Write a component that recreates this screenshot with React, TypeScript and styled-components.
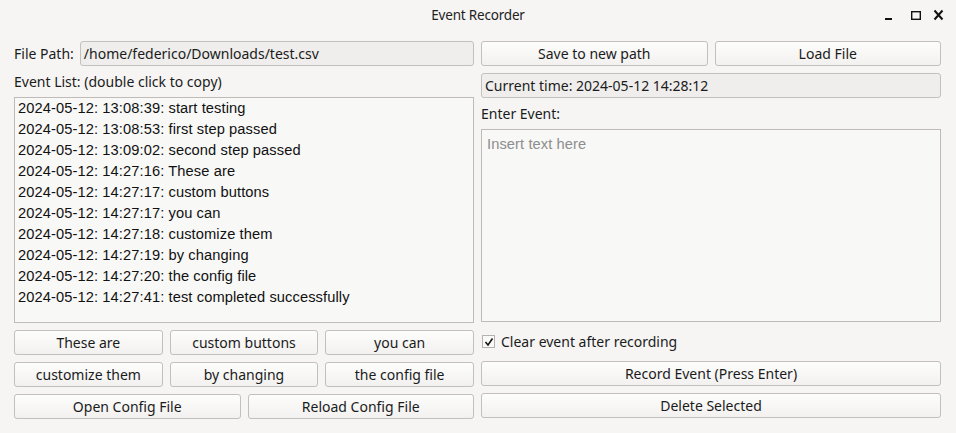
import React from "react";
import styled, { createGlobalStyle } from "styled-components";

const Global = createGlobalStyle`
  html, body { margin: 0; padding: 0; background: #f6f5f4; }
  * { box-sizing: border-box; }
`;

const Window = styled.div`
  width: 956px;
  height: 433px;
  background: #f6f5f4;
  display: flex;
  flex-direction: column;
  font-family: "Noto Sans", sans-serif;
  font-size: 14px;
  color: #1b1b1b;
  overflow: hidden;
`;

const TitleBar = styled.div`
  height: 30px;
  display: grid;
  grid-template-columns: 1fr auto 1fr;
  align-items: center;
`;

const Title = styled.div`
  grid-column: 2;
  font-size: 13.5px;
  color: #222;
  letter-spacing: -0.2px;
`;

const WinControls = styled.div`
  grid-column: 3;
  justify-self: end;
  display: flex;
  align-items: center;
  padding-right: 12px;
`;

const Main = styled.div`
  flex: 1;
  display: grid;
  grid-template-columns: 460px 460px;
  column-gap: 7px;
  padding: 12px 15px 14px 14px;
`;

const Column = styled.div`
  display: flex;
  flex-direction: column;
  gap: 7px;
  min-height: 0;
`;

const Row = styled.div`
  display: flex;
  align-items: center;
  gap: 6px;
  height: 25px;
`;

const Label = styled.div`
  height: 17px;
  line-height: 17px;
  white-space: nowrap;
`;

const ReadOnly = styled.div<{ $grow?: boolean }>`
  flex: ${(p) => (p.$grow ? 1 : "none")};
  height: 25px;
  line-height: 23px;
  padding: 0 3px;
  background: #efeeec;
  border: 1px solid #c4c0bc;
  border-radius: 3px;
  white-space: nowrap;
  overflow: hidden;
`;

const ListBox = styled.div`
  height: 226px;
  background: #f8f8f7;
  border: 1px solid #bfbbb7;
  overflow: hidden;
  font-family: "Liberation Sans", Arial, sans-serif;
  font-size: 14.67px;
  letter-spacing: 0.1px;
  color: #111;
`;

const ListItem = styled.div`
  height: 21px;
  line-height: 21px;
  padding-left: 3px;
  white-space: nowrap;
`;

const TextArea = styled.div`
  height: 193px;
  background: #f8f8f7;
  border: 1px solid #bfbbb7;
  padding: 6px 5px;
  font-family: "Liberation Sans", Arial, sans-serif;
  font-size: 14.67px;
  letter-spacing: 0.1px;
  color: #8d8d8d;
`;

const ButtonGrid = styled.div<{ $cols: number }>`
  display: grid;
  grid-template-columns: repeat(${(p) => p.$cols}, 1fr);
  column-gap: 7px;
  height: 25px;
`;

const Button = styled.button`
  height: 25px;
  margin: 0;
  padding: 0 6px;
  font-family: "Noto Sans", sans-serif;
  font-size: 14px;
  color: #1b1b1b;
  background: linear-gradient(#fdfdfc, #f2f1f0);
  border: 1px solid #c3bfbb;
  border-radius: 3px;
  white-space: nowrap;
  line-height: 23px;
`;

const CheckRow = styled.label`
  display: flex;
  align-items: center;
  gap: 6px;
  height: 25px;
  padding-left: 1px;
`;

const CheckBox = styled.span`
  width: 13px;
  height: 13px;
  border: 1px solid #b5b1ad;
  background: #f9f9f8;
  display: flex;
  align-items: center;
  justify-content: center;
`;

const entries = [
  "2024-05-12: 13:08:39: start testing",
  "2024-05-12: 13:08:53: first step passed",
  "2024-05-12: 13:09:02: second step passed",
  "2024-05-12: 14:27:16: These are",
  "2024-05-12: 14:27:17: custom buttons",
  "2024-05-12: 14:27:17: you can",
  "2024-05-12: 14:27:18: customize them",
  "2024-05-12: 14:27:19: by changing",
  "2024-05-12: 14:27:20: the config file",
  "2024-05-12: 14:27:41: test completed successfully",
];

export default function App() {
  return (
    <Window>
      <Global />
      <TitleBar>
        <Title>Event Recorder</Title>
        <WinControls>
          <svg width="26" height="12" viewBox="0 0 26 12">
            <rect x="1" y="9" width="7" height="2" fill="#111" />
          </svg>
          <svg width="23" height="12" viewBox="0 0 23 12">
            <rect x="1.7" y="2.7" width="8.6" height="7.6" fill="none" stroke="#111" strokeWidth="1.4" />
          </svg>
          <svg width="11" height="12" viewBox="0 0 11 12">
            <path d="M1.5 1.5 L9.5 10.5 M9.5 1.5 L1.5 10.5" stroke="#111" strokeWidth="2" />
          </svg>
        </WinControls>
      </TitleBar>
      <Main>
        <Column>
          <Row>
            <Label>File Path:</Label>
            <ReadOnly $grow>/home/federico/Downloads/test.csv</ReadOnly>
          </Row>
          <Label>Event List: (double click to copy)</Label>
          <ListBox>
            {entries.map((e) => (
              <ListItem key={e}>{e}</ListItem>
            ))}
          </ListBox>
          <ButtonGrid $cols={3}>
            <Button>These are</Button>
            <Button>custom buttons</Button>
            <Button>you can</Button>
          </ButtonGrid>
          <ButtonGrid $cols={3}>
            <Button>customize them</Button>
            <Button>by changing</Button>
            <Button>the config file</Button>
          </ButtonGrid>
          <ButtonGrid $cols={2}>
            <Button>Open Config File</Button>
            <Button>Reload Config File</Button>
          </ButtonGrid>
        </Column>
        <Column>
          <ButtonGrid $cols={2}>
            <Button>Save to new path</Button>
            <Button>Load File</Button>
          </ButtonGrid>
          <ReadOnly>Current time: 2024-05-12 14:28:12</ReadOnly>
          <Label>Enter Event:</Label>
          <TextArea>Insert text here</TextArea>
          <CheckRow>
            <CheckBox>
              <svg width="10" height="10" viewBox="0 0 10 10">
                <path d="M1.5 5 L4 8 L8.5 1.5" fill="none" stroke="#111" strokeWidth="1.5" />
              </svg>
            </CheckBox>
            Clear event after recording
          </CheckRow>
          <Button>Record Event (Press Enter)</Button>
          <Button>Delete Selected</Button>
        </Column>
      </Main>
    </Window>
  );
}
